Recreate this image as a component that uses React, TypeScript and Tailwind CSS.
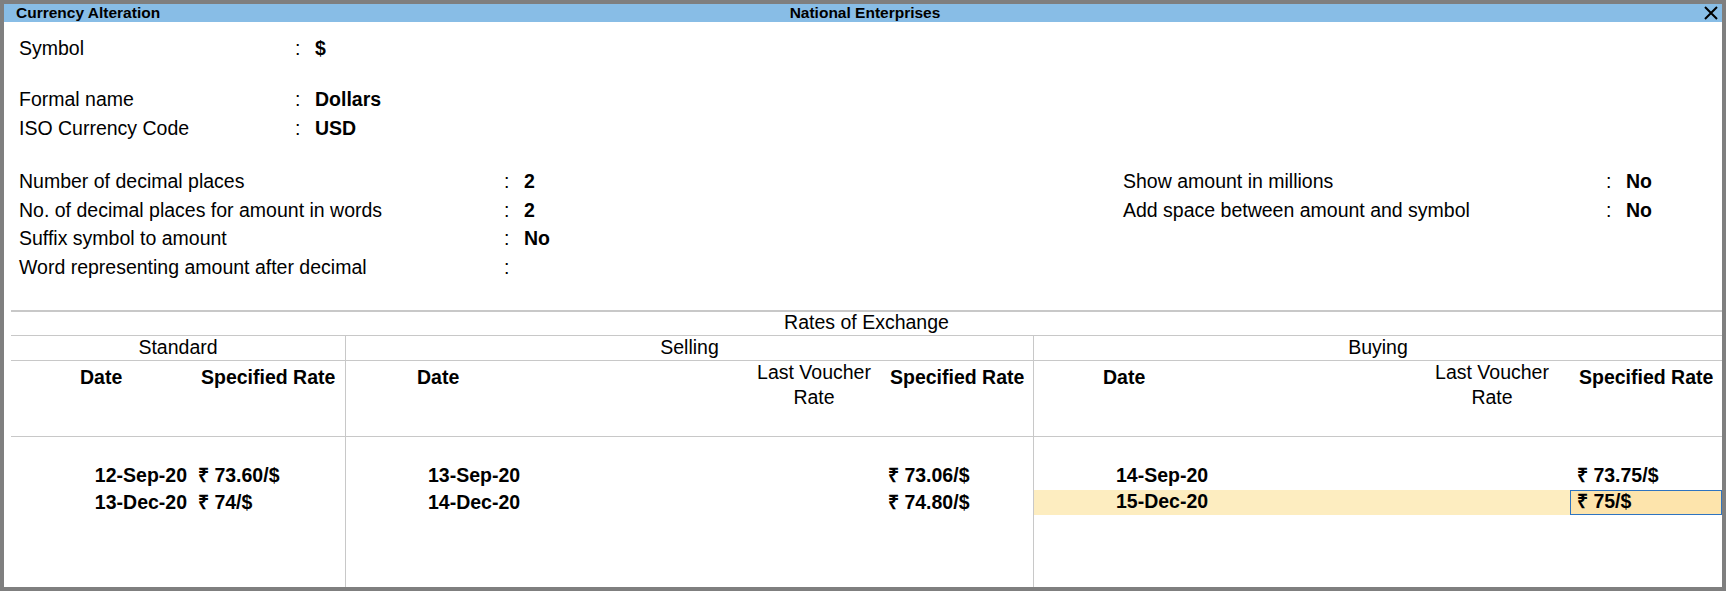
import React from "react";

const F = { fontFamily: '"Liberation Sans", Arial, sans-serif' };

function Row({ label, value, colonX }: { label: string; value: string; colonX: string }) {
  return (
    <div className="flex h-[28.5px] items-center">
      <div className={colonX}>{label}</div>
      <div className="w-[20px]">:</div>
      <div className="font-bold">{value}</div>
    </div>
  );
}

export default function App() {
  return (
    <div style={F} className="w-[1726px] h-[591px] bg-[#7f7f7f] p-[4px] pb-[4px] text-[19.5px] text-black">
      <div className="flex h-[18px] items-center bg-[#88bde6] px-[12px] text-[15.5px] font-bold leading-none">
        <div className="w-[300px]">Currency Alteration</div>
        <div className="flex-1 text-center pr-[290px]">National Enterprises</div>
        <svg width="14" height="14" viewBox="0 0 14 14" className="mr-[-8px]"><path d="M1 1L13 13M13 1L1 13" stroke="black" strokeWidth="2" /></svg>
      </div>
      <div className="h-[565px] bg-white pl-[7px] flex flex-col">
        <div className="pl-[8px] pt-[12px]">
          <Row label="Symbol" value="$" colonX="w-[276px]" />
          <div className="h-[23px]" />
          <Row label="Formal name" value="Dollars" colonX="w-[276px]" />
          <Row label="ISO Currency Code" value="USD" colonX="w-[276px]" />
          <div className="h-[25px]" />
          <div className="flex">
            <div className="w-[1104px]">
              <Row label="Number of decimal places" value="2" colonX="w-[485px]" />
              <Row label="No. of decimal places for amount in words" value="2" colonX="w-[485px]" />
              <Row label="Suffix symbol to amount" value="No" colonX="w-[485px]" />
              <Row label="Word representing amount after decimal" value="" colonX="w-[485px]" />
            </div>
            <div>
              <Row label="Show amount in millions" value="No" colonX="w-[483px]" />
              <Row label="Add space between amount and symbol" value="No" colonX="w-[483px]" />
            </div>
          </div>
        </div>
        <div className="mt-[28px] border-t-2 border-[#c8c8c8] flex-1 flex flex-col">
          <div className="h-[24px] flex items-center justify-center border-b border-[#c8c8c8]">Rates of Exchange</div>
          <div className="flex flex-1">
            <div className="w-[335px] border-r border-[#c8c8c8] flex flex-col">
              <div className="h-[25px] flex items-center justify-center border-b border-[#c8c8c8]">Standard</div>
              <div className="h-[76px] border-b border-[#c8c8c8] flex font-bold pt-[2px]">
                <div className="w-[190px] pl-[69px]">Date</div>
                <div>Specified Rate</div>
              </div>
              <div className="pt-[26px] font-bold">
                <div className="flex h-[27px] items-center"><div className="w-[187px] text-right pr-[11px]">12-Sep-20</div><div>₹ 73.60/$</div></div>
                <div className="flex h-[27px] items-center"><div className="w-[187px] text-right pr-[11px]">13-Dec-20</div><div>₹ 74/$</div></div>
              </div>
            </div>
            <div className="w-[688px] border-r border-[#c8c8c8] flex flex-col">
              <div className="h-[25px] flex items-center justify-center border-b border-[#c8c8c8]">Selling</div>
              <div className="h-[76px] border-b border-[#c8c8c8] flex pt-[2px]">
                <div className="w-[405px] pl-[71px] font-bold">Date</div>
                <div className="w-[126px] text-center leading-[25px] -mt-[3px]">Last Voucher<br />Rate</div>
                <div className="pl-[13px] font-bold whitespace-nowrap">Specified Rate</div>
              </div>
              <div className="pt-[26px] font-bold">
                <div className="flex h-[27px] items-center"><div className="w-[542px] pl-[82px]">13-Sep-20</div><div>₹ 73.06/$</div></div>
                <div className="flex h-[27px] items-center"><div className="w-[542px] pl-[82px]">14-Dec-20</div><div>₹ 74.80/$</div></div>
              </div>
            </div>
            <div className="flex-1 flex flex-col">
              <div className="h-[25px] flex items-center justify-center border-b border-[#c8c8c8]">Buying</div>
              <div className="h-[76px] border-b border-[#c8c8c8] flex pt-[2px]">
                <div className="w-[393px] pl-[69px] font-bold">Date</div>
                <div className="w-[130px] text-center leading-[25px] -mt-[3px]">Last Voucher<br />Rate</div>
                <div className="pl-[22px] font-bold whitespace-nowrap">Specified Rate</div>
              </div>
              <div className="pt-[26px] font-bold">
                <div className="flex h-[27px] items-center"><div className="w-[536px] pl-[82px]">14-Sep-20</div><div className="pl-[7px]">₹ 73.75/$</div></div>
                <div className="flex h-[25px] items-center bg-[#fdedc0]"><div className="w-[536px] pl-[82px]">15-Dec-20</div><div className="flex-1 h-full flex items-center pl-[6px] border border-[#2f74c0] bg-[#fde4ac]">₹ 75/$</div></div>
              </div>
            </div>
          </div>
        </div>
      </div>
    </div>
  );
}
